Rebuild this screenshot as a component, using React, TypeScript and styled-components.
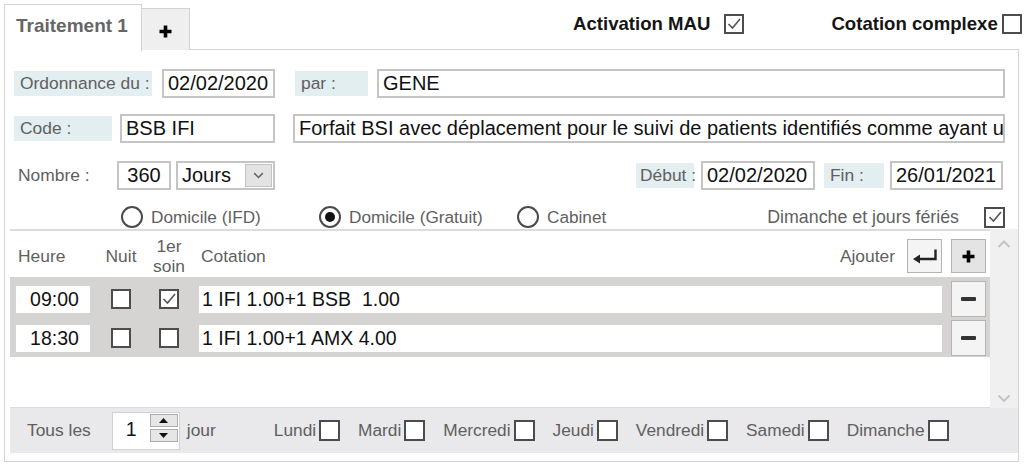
import React from "react";
import styled, { createGlobalStyle } from "styled-components";

const Global = createGlobalStyle`
  html, body { margin: 0; padding: 0; background: #fff; overflow: hidden; }
  body { font-family: "Liberation Sans", Arial, sans-serif; }
  * { box-sizing: border-box; }
`;

const Page = styled.div`
  width: 1024px;
  height: 469px;
  overflow: hidden;
  padding: 4px 0 0 4px;
`;

const TopBar = styled.div`
  display: flex;
  align-items: flex-start;
  height: 46px;
  width: 1060px;
`;

const Tabs = styled.div`
  display: flex;
  align-items: flex-end;
  height: 47px;
  position: relative;
  z-index: 1;
`;

const Tab = styled.div<{ $active?: boolean }>`
  height: ${(p) => (p.$active ? "47px" : "42px")};
  width: ${(p) => (p.$active ? "138px" : "48px")};
  border: 1px solid #d3d3d3;
  border-bottom: none;
  border-left: ${(p) => (p.$active ? "1px solid #d3d3d3" : "none")};
  background: ${(p) => (p.$active ? "#fff" : "#efefef")};
  margin-bottom: ${(p) => (p.$active ? "0" : "1px")};
  display: flex;
  justify-content: ${(p) => (p.$active ? "flex-start" : "center")};
  align-items: flex-start;
  padding: ${(p) => (p.$active ? "11px 0 0 11px" : "16px 0 0 0")};
  font-weight: bold;
  font-size: 19px;
  line-height: 20px;
  color: #666;
`;

const Options = styled.div`
  display: flex;
  align-items: center;
  margin: 10px 0 0 383px;
  height: 20px;
`;

const OptionItem = styled.div<{ $gap: number; $ml?: number }>`
  display: flex;
  align-items: center;
  gap: ${(p) => p.$gap}px;
  margin-left: ${(p) => p.$ml ?? 0}px;
  font-weight: bold;
  font-size: 18.6px;
  color: #151515;
  white-space: nowrap;
`;

const Panel = styled.div`
  width: 1015px;
  height: 413px;
  border: 1px solid #d4d4d4;
  margin-top: -1px;
  display: flex;
  flex-direction: column;
`;

const FormArea = styled.div`
  padding: 19px 13px 0 9px;
  display: flex;
  flex-direction: column;
`;

const FormRow = styled.div<{ $mt: number; $h: number }>`
  display: flex;
  align-items: center;
  margin-top: ${(p) => p.$mt}px;
  height: ${(p) => p.$h}px;
`;

const Label = styled.div<{ $w: number; $ml?: number; $pl?: number; $bg?: boolean }>`
  width: ${(p) => p.$w}px;
  margin-left: ${(p) => p.$ml ?? 0}px;
  height: 25px;
  line-height: 25px;
  padding-left: ${(p) => p.$pl ?? 6}px;
  background: ${(p) => (p.$bg === false ? "transparent" : "#e3eef0")};
  color: #5f5f5f;
  font-size: 17.4px;
  white-space: nowrap;
  flex-shrink: 0;
`;

const Input = styled.div<{ $w?: number; $ml?: number; $center?: boolean }>`
  ${(p) => (p.$w ? `width: ${p.$w}px; flex-shrink: 0;` : "flex: 1; min-width: 0;")}
  margin-left: ${(p) => p.$ml ?? 0}px;
  height: 29px;
  border: 2px solid #c4c4c4;
  background: #fff;
  color: #111;
  font-size: 20px;
  line-height: 25px;
  padding: 0 4px;
  white-space: nowrap;
  overflow: hidden;
  text-align: ${(p) => (p.$center ? "center" : "left")};
`;

const Select = styled.div`
  width: 99px;
  margin-left: 5px;
  height: 29px;
  border: 2px solid #c4c4c4;
  display: flex;
  align-items: center;
  justify-content: space-between;
  padding: 0 1px 0 4px;
  font-size: 20px;
  color: #111;
`;

const DropBtn = styled.div`
  width: 27px;
  height: 23px;
  background: #e3e3e3;
  border: 1px solid #c3c3c3;
  display: flex;
  align-items: center;
  justify-content: center;
`;

const Spacer = styled.div`
  flex: 1;
`;

const EndGap = styled.div`
  flex: 0 0 2px;
`;

const RadioItem = styled.div<{ $ml?: number }>`
  width: 198px;
  margin-left: ${(p) => p.$ml ?? 0}px;
  display: flex;
  align-items: center;
  gap: 8px;
  color: #5f5f5f;
  font-size: 17.2px;
  flex-shrink: 0;
`;

const RadioCircle = styled.div<{ $on?: boolean }>`
  width: 22px;
  height: 22px;
  border-radius: 50%;
  border: 2px solid #4a4a4a;
  display: flex;
  align-items: center;
  justify-content: center;
  &::after {
    content: "";
    display: ${(p) => (p.$on ? "block" : "none")};
    width: 10px;
    height: 10px;
    border-radius: 50%;
    background: #111;
  }
`;

const PlainText = styled.div<{ $mr?: number; $size?: number }>`
  color: #5f5f5f;
  font-size: ${(p) => p.$size ?? 17.4}px;
  margin-right: ${(p) => p.$mr ?? 0}px;
  white-space: nowrap;
`;

const Box = styled.div<{ $size: number }>`
  width: ${(p) => p.$size}px;
  height: ${(p) => p.$size}px;
  border: 2px solid #4c4c4c;
  background: #fff;
  flex-shrink: 0;
  display: flex;
  align-items: center;
  justify-content: center;
`;

const ListArea = styled.div`
  margin: 1px 0 0 5px;
  display: flex;
  flex-direction: column;
`;

const ListBody = styled.div`
  display: flex;
  height: 179px;
`;

const ListMain = styled.div`
  flex: 1;
  border-top: 2px solid #dcdcdc;
  border-bottom: 1px solid #dcdcdc;
  display: flex;
  flex-direction: column;
`;

const Scrollbar = styled.div`
  width: 28px;
  background: #f0f0f0;
  display: flex;
  flex-direction: column;
  justify-content: space-between;
  align-items: center;
  padding: 11px 0 6px;
`;

const Grid = styled.div<{ $h: number; $pt?: number }>`
  display: grid;
  grid-template-columns: 74px 62px 34px 1fr 48px;
  align-items: center;
  height: ${(p) => p.$h}px;
  padding: ${(p) => p.$pt ?? 0}px 0 0 6px;
`;

const HeadCell = styled.div<{ $center?: boolean; $pl?: number }>`
  color: #5f5f5f;
  font-size: 17.4px;
  line-height: 20px;
  text-align: ${(p) => (p.$center ? "center" : "left")};
  padding-left: ${(p) => p.$pl ?? 0}px;
`;

const CotationHead = styled.div`
  display: flex;
  align-items: center;
  padding-left: 15px;
  color: #5f5f5f;
  font-size: 17.4px;
`;

const AddGroup = styled.div`
  margin-left: auto;
  display: flex;
  align-items: center;
  gap: 12px;
`;

const IconButton = styled.div<{ $tone: "light" | "mid"; $h?: number }>`
  width: 35px;
  height: ${(p) => p.$h ?? 34}px;
  border: 1px solid #b4b4b4;
  background: ${(p) => (p.$tone === "mid" ? "#e4e4e4" : "#f4f4f4")};
  display: flex;
  align-items: center;
  justify-content: center;
`;

const Rows = styled.div`
  background: #d6d3d3;
  padding: 4px 0 1px;
  display: flex;
  flex-direction: column;
  gap: 3px;
`;

const Cell = styled.div<{ $center?: boolean; $pl?: number }>`
  display: flex;
  justify-content: ${(p) => (p.$center ? "center" : "flex-start")};
  align-items: center;
  padding-left: ${(p) => p.$pl ?? 0}px;
`;

const Field = styled.div<{ $center?: boolean }>`
  width: 100%;
  height: 27px;
  background: #fff;
  color: #111;
  font-size: 19.5px;
  line-height: 27px;
  padding-left: 3px;
  text-align: ${(p) => (p.$center ? "center" : "left")};
  white-space: pre;
  overflow: hidden;
`;

const Footer = styled.div`
  height: 45px;
  background: #e9e8ea;
  display: flex;
  align-items: center;
  padding-left: 17px;
`;

const SpinBox = styled.div`
  width: 68px;
  height: 38px;
  margin-left: 21px;
  background: #fff;
  border: 1px solid #d2d2d2;
  display: flex;
  justify-content: space-between;
  padding: 1px 1px 0 0;
  margin-right: 7px;
`;

const SpinValue = styled.div`
  font-size: 19.5px;
  color: #111;
  padding: 4px 0 0 13px;
`;

const SpinButtons = styled.div`
  width: 28px;
  display: flex;
  flex-direction: column;
  gap: 2px;
`;

const SpinBtn = styled.div`
  height: 13px;
  background: #e6e6e6;
  border: 1px solid #adadad;
  display: flex;
  align-items: center;
  justify-content: center;
`;

const Days = styled.div`
  display: flex;
  align-items: center;
  gap: 18px;
  margin-left: 58px;
`;

const DayItem = styled.div`
  display: flex;
  align-items: center;
  gap: 3px;
  color: #5f5f5f;
  font-size: 17.3px;
`;

const Check = ({ on, size = 20 }: { on?: boolean; size?: number }) => (
  <Box $size={size}>
    {on && (
      <svg width="16" height="16" viewBox="0 0 16 16">
        <polyline points="2.5,8 6.5,12 14,3" fill="none" stroke="#555" strokeWidth="1.6" />
      </svg>
    )}
  </Box>
);

const PlusIcon = () => (
  <svg width="13" height="13" viewBox="0 0 13 13">
    <path d="M6.5 0.5v12M0.5 6.5h12" stroke="#000" strokeWidth="3.6" />
  </svg>
);

const MinusIcon = () => (
  <svg width="15" height="4" viewBox="0 0 15 4">
    <rect x="0" y="0" width="15" height="4" fill="#333" rx="1" />
  </svg>
);

const EnterIcon = () => (
  <svg width="26" height="16" viewBox="0 0 26 16">
    <path d="M23.5 1.5V11H7" fill="none" stroke="#222" strokeWidth="2.4" />
    <polygon points="1,11 8,6.5 8,15.5" fill="#222" />
  </svg>
);

const Chevron = ({ up, color, w = 14 }: { up?: boolean; color: string; w?: number }) => (
  <svg width={w} height={w * 0.6} viewBox="0 0 14 8.4">
    <polyline
      points={up ? "1.5,7 7,1.5 12.5,7" : "1.5,1.5 7,7 12.5,1.5"}
      fill="none"
      stroke={color}
      strokeWidth="2"
    />
  </svg>
);

const Tri = ({ up }: { up?: boolean }) => (
  <svg width="9" height="5" viewBox="0 0 9 5">
    <polygon points={up ? "0,5 4.5,0 9,5" : "0,0 4.5,5 9,0"} fill="#111" />
  </svg>
);

const rows = [
  { time: "09:00", nuit: false, first: true, cot: "1 IFI 1.00+1 BSB  1.00" },
  { time: "18:30", nuit: false, first: false, cot: "1 IFI 1.00+1 AMX 4.00" },
];

const days = ["Lundi", "Mardi", "Mercredi", "Jeudi", "Vendredi", "Samedi", "Dimanche"];

export default function App() {
  return (
    <Page>
      <Global />
      <TopBar>
        <Tabs>
          <Tab $active>Traitement 1</Tab>
          <Tab>
            <PlusIcon />
          </Tab>
        </Tabs>
        <Options>
          <OptionItem $gap={14}>
            Activation MAU <Check on />
          </OptionItem>
          <OptionItem $gap={4} $ml={87}>
            Cotation complexe <Check />
          </OptionItem>
        </Options>
      </TopBar>
      <Panel>
        <FormArea>
          <FormRow $mt={0} $h={29}>
            <Label $w={138}>Ordonnance du :</Label>
            <Input $w={113} $ml={10}>02/02/2020</Input>
            <Label $w={73} $ml={20}>par :</Label>
            <Input $ml={9}>GENE</Input>
          </FormRow>
          <FormRow $mt={16} $h={29}>
            <Label $w={98}>Code :</Label>
            <Input $w={155} $ml={8}>BSB IFI</Input>
            <Input $ml={18}>
              Forfait BSI avec déplacement pour le suivi de patients identifiés comme ayant u
            </Input>
          </FormRow>
          <FormRow $mt={18} $h={29}>
            <Label $w={103} $pl={4} $bg={false}>Nombre :</Label>
            <Input $w={54} $center>360</Input>
            <Select>
              Jours
              <DropBtn>
                <Chevron color="#666" w={11} />
              </DropBtn>
            </Select>
            <Spacer />
            <Label $w={58} $pl={4}>Début :</Label>
            <Input $w={114} $ml={7}>02/02/2020</Input>
            <Label $w={60} $ml={9}>Fin :</Label>
            <Input $w={113} $ml={6}>26/01/2021</Input>
            <EndGap />
          </FormRow>
          <FormRow $mt={16} $h={22}>
            <RadioItem $ml={107}>
              <RadioCircle />
              Domicile (IFD)
            </RadioItem>
            <RadioItem>
              <RadioCircle $on />
              Domicile (Gratuit)
            </RadioItem>
            <RadioItem>
              <RadioCircle />
              Cabinet
            </RadioItem>
            <Spacer />
            <PlainText $mr={25} $size={17.8}>Dimanche et jours fériés</PlainText>
            <Check on size={21} />
          </FormRow>
        </FormArea>
        <ListArea>
          <ListBody>
            <ListMain>
              <Grid $h={46} $pt={4}>
                <HeadCell $pl={2}>Heure</HeadCell>
                <HeadCell $center>Nuit</HeadCell>
                <HeadCell $center>
                  1er
                  <br />
                  soin
                </HeadCell>
                <CotationHead>
                  Cotation
                  <AddGroup>
                    Ajouter
                    <IconButton $tone="light">
                      <EnterIcon />
                    </IconButton>
                  </AddGroup>
                </CotationHead>
                <Cell $pl={9}>
                  <IconButton $tone="mid">
                    <PlusIcon />
                  </IconButton>
                </Cell>
              </Grid>
              <Rows>
                {rows.map((r) => (
                  <Grid $h={36} key={r.time}>
                    <Cell>
                      <Field $center>{r.time}</Field>
                    </Cell>
                    <Cell $center>
                      <Check on={r.nuit} />
                    </Cell>
                    <Cell $center>
                      <Check on={r.first} />
                    </Cell>
                    <Cell $pl={13}>
                      <Field>{r.cot}</Field>
                    </Cell>
                    <Cell $pl={9}>
                      <IconButton $tone="light" $h={36}>
                        <MinusIcon />
                      </IconButton>
                    </Cell>
                  </Grid>
                ))}
              </Rows>
            </ListMain>
            <Scrollbar>
              <Chevron up color="#c4c4c4" />
              <Chevron color="#c4c4c4" />
            </Scrollbar>
          </ListBody>
          <Footer>
            <PlainText>Tous les</PlainText>
            <SpinBox>
              <SpinValue>1</SpinValue>
              <SpinButtons>
                <SpinBtn>
                  <Tri up />
                </SpinBtn>
                <SpinBtn>
                  <Tri />
                </SpinBtn>
              </SpinButtons>
            </SpinBox>
            <PlainText>jour</PlainText>
            <Days>
              {days.map((d) => (
                <DayItem key={d}>
                  {d}
                  <Check size={21} />
                </DayItem>
              ))}
            </Days>
          </Footer>
        </ListArea>
      </Panel>
    </Page>
  );
}
